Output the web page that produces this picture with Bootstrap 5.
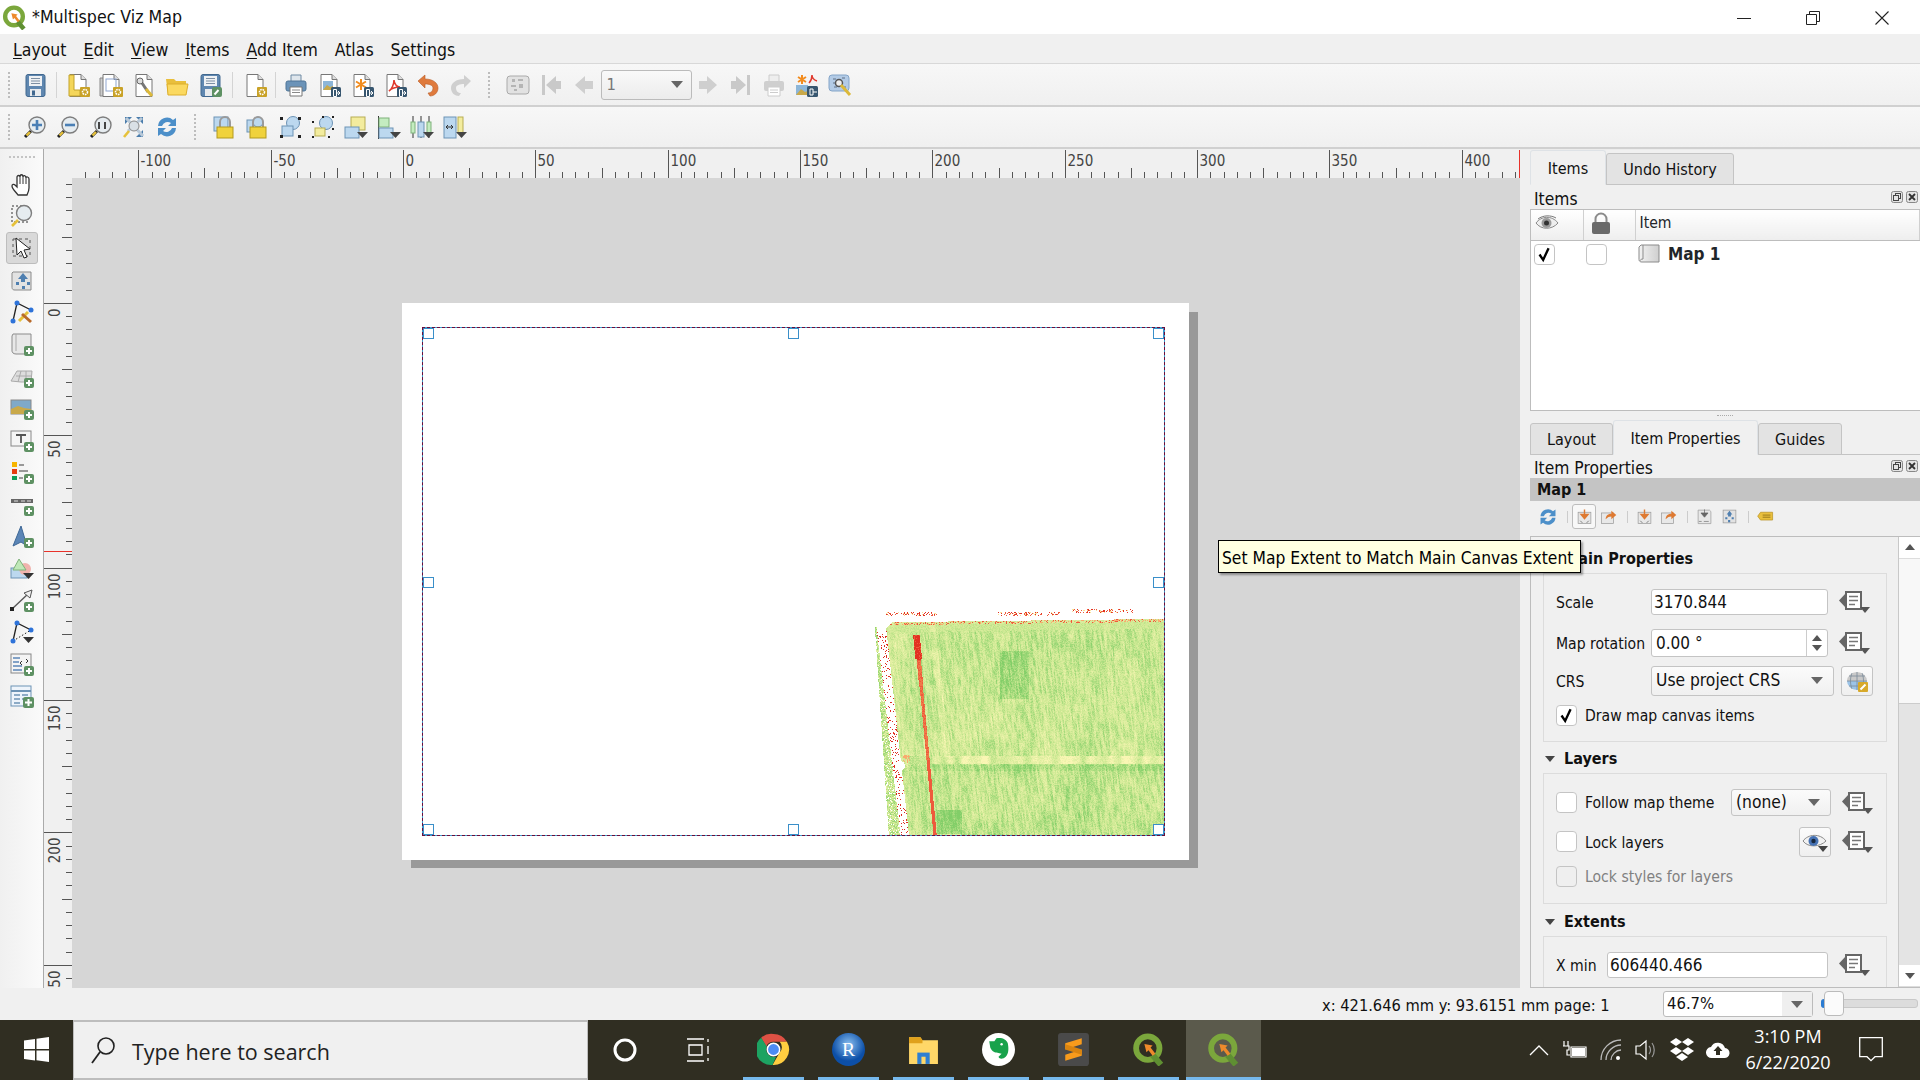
<!DOCTYPE html>
<html lang="en">
<head>
<meta charset="UTF-8">
<title>*Multispec Viz Map</title>
<link href="https://cdn.jsdelivr.net/npm/bootstrap@5.3.0/dist/css/bootstrap.min.css" rel="stylesheet">
<style>
    html, body { margin: 0; width: 1920px; height: 1080px; overflow: hidden; }
    body {
        background: #f0f0f0;
        color: #111;
        font-family: "DejaVu Sans Condensed", "DejaVu Sans", sans-serif;
        font-stretch: condensed;
        font-size: 15.6px;
        line-height: 1.2;
    }
    .app { width: 1920px; height: 1080px; }
    svg { display: block; flex: none; }

    /* title + menu */
    .titlebar { height: 34px; background: #fff; padding-left: 2px; padding-top: 1px; font-size: 17.6px; }
    .titlebar .wintitle { margin-left: 5px; }
    .winbtn { width: 69px; height: 34px; }
    .menubar { height: 30px; border-bottom: 1px solid #d8d8d8; padding-left: 13px; padding-top: 4px; font-size: 17.5px; }
    .menubar span { margin-right: 17px; }
    .menubar u { text-underline-offset: 2px; }

    /* toolbars */
    .toolrow { height: 43px; padding-top: 1px; background: linear-gradient(#f7f7f7, #f0f0f0); border-bottom: 2px solid #d0d0d0; }
    .row-first { padding-left: 8px; }
    .tcell { width: 33px; height: 33px; }
    .tsep { width: 10px; height: 26px; }
    .tsep::after { content: ""; width: 1px; height: 26px; background: #d4d4d4; }
    .tsep-wide { width: 12px; }
    .tsep-thin { width: 8px; }
    .gripv { width: 3px; height: 26px; border-left: 2px dotted #bdbdbd; }
    .gapgrip { width: 24px; }
    .grip-lead { width: 7.500px; }
    .pagecombo { width: 91px; height: 30px; background: linear-gradient(#f9f9f9, #ececec); border: 1px solid #bbb; border-radius: 3px; padding-left: 5px; color: #777; font-size: 16.5px; }
    .tri { width: 0; height: 0; border-left: 6px solid transparent; border-right: 6px solid transparent; border-top: 7px solid #666; }

    /* workspace */
    .workspace { height: 839px; }
    .vtools { width: 44px; background: linear-gradient(90deg, #f0f0f0, #fafafa); border-right: 1px solid #aaa; padding-top: 7px; }
    .griph { width: 26px; height: 3px; border-top: 2px dotted #c4c4c4; margin: 0 auto 9px; }
    .vcell { width: 32px; height: 32px; margin-left: 6px; }
    .vcell.is-on { background: #d9d9d9; border: 1px solid #bdbdbd; border-radius: 3px; }
    .viewarea { width: 1476px; }
    .hruler { height: 29px; }
    .rulerbody { height: 810px; }
    .vruler { width: 28px; }
    .ruler-txt { font-size: 15px; fill: #444; }
    .canvasarea { width: 1448px; background: #d6d6d6; overflow: hidden; }
    .pageshadow { position: absolute; left: 339px; top: 134px; width: 787px; height: 556px; background: #999; }
    .pagesheet { position: absolute; left: 330px; top: 125px; width: 787px; height: 557px; background: #fff; }
    .mapsel { position: absolute; left: 20px; top: 24px; width: 743px; height: 509px; border: 1px solid #3b9ac9; }
    .mapsel::after { content: ""; position: absolute; inset: -1px; border: 1px dashed #6d0d3b; }
    .fieldmap { position: absolute; right: 0; bottom: 0; display: block; }
    .hnd { position: absolute; width: 11px; height: 11px; background: #fff; border: 1px solid #3a8fc9; z-index: 2; }
    .h-l { left: 0; } .h-c { left: 365px; } .h-r { right: 0; }
    .h-t { top: 0; } .h-m { top: 249px; } .h-b { bottom: 0; }

    /* dock */
    .dock { width: 400px; padding-left: 10px; border-top: 1px solid #ececec; }
    .qt-tabs { --bs-nav-tabs-border-color: #c4c4c4; --bs-nav-tabs-border-width: 1px; flex-wrap: nowrap; font-size: 16px; }
    .qt-tabs .nav-link { height: 32px; padding: 0; text-align: center; line-height: 32px; color: #111; background: #e3e3e3; border: 1px solid #c4c4c4; border-radius: 3px 3px 0 0; margin-bottom: -1px; }
    .qt-tabs .nav-link.active { height: 35px; margin-top: -3px; background: #f0f0f0; border-bottom-color: #f0f0f0; line-height: 35px; color: #111; }
    .tabstrip-a { height: 36px; padding-top: 3px; }
    .tabstrip-b { height: 34px; padding-top: 2px; }
    .tw-76 { width: 76px; } .tw-128 { width: 128px; } .tw-83 { width: 83px; } .tw-145 { width: 145px; } .tw-84 { width: 84px; }
    .docktitle { height: 23px; padding-left: 4px; padding-top: 4px; font-size: 17.3px; }
    .dockbtns { gap: 3px; padding-right: 2px; padding-bottom: 5px; }
    .itemlist { height: 202px; background: #fff; border: 1px solid #bdbdbd; border-right: 0; }
    .qt-list { table-layout: fixed; width: 100%; --bs-table-bg: transparent; }
    .qt-list th { height: 30px; padding: 0 0 3px 4px; font-weight: 400; background: linear-gradient(#fff, #eee); border-bottom: 1px solid #bdbdbd; border-right: 1px solid #d0d0d0; vertical-align: middle; }
    .qt-list td { padding: 3px 3px; vertical-align: middle; }
    .w-52 { width: 52px; }
    .itemname { font-weight: 700; font-size: 17px; font-stretch: normal; margin-left: 8px; }
    .splitter { height: 10px; }
    .splitter::after { content: ""; width: 16px; border-top: 1px dotted #aaa; }
    .mapbar { height: 23px; background: #c4c4c4; font-weight: 700; font-size: 16px; padding-left: 7px; font-stretch: normal; }
    .proptools { height: 35px; padding-left: 6px; padding-bottom: 3px; }
    .ptool { width: 24.500px; height: 20px; }
    .ptool-on { width: 24px; height: 25px; background: #f8f8f8; border: 1px solid #bdbdbd; border-radius: 3px; }
    .psep { width: 1px; height: 12px; background: #ccc; margin: 0 4.500px 0 6px; }
    .scrollbox { height: 453px; border: 1px solid #bdbdbd; border-right: 0; overflow: hidden; }
    .propcol { width: 367px; padding-left: 12px; overflow: hidden; }
    .qt-scroll { width: 22px; border-left: 1px solid #c8c8c8; background: #e4e4e4; }
    .scr-btn { height: 22px; background: #fff; border-bottom: 1px solid #ddd; }
    .scr-thumb { height: 145px; background: #f8f8f8; border-bottom: 1px solid #ccc; }
    .scr-tri-up { border-left: 5px solid transparent; border-right: 5px solid transparent; border-bottom: 6px solid #555; }
    .scr-tri-dn { border-left: 5px solid transparent; border-right: 5px solid transparent; border-top: 6px solid #555; }
    .grouphead { font-weight: 700; font-size: 16px; font-stretch: normal; height: 31px; margin-left: 2px; }
    .gh-main { height: 36px; padding-top: 8px; }
    .gh-lay { height: 31px; padding-top: 3px; }
    .gh-ext { height: 32px; padding-top: 4px; }
    .gh-tri { border-left: 5px solid transparent; border-right: 5px solid transparent; border-top: 6px solid #444; margin-right: 9px; }
    .qt-group { width: 344px; border: 1px solid #dcdcdc; padding: 15px 12px 0; }
    .qt-group span { padding-top: 3px; }
    .g-main { height: 169px; }
    .g-lay { height: 131px; }
    .g-ext { height: 100px; }
    .prow { margin-bottom: 9px; }
    .h26 { height: 26px; margin-bottom: 14px; }
    .h28 { height: 28px; }
    .h30 { height: 30px; }
    .h27 { height: 27px; margin-bottom: 11px; }
    .h21 { height: 21px; }
    .lbl { width: 95px; flex: none; }
    .lbl-short { width: 51px; flex: none; }
    .qt-input { display: block; height: 100%; padding: 0 2px; border: 1px solid #c4c4c4; border-radius: 3px; background: #fff; color: #111; font-size: 17px; line-height: 1; box-shadow: none; min-height: 0; }
    .w-177 { width: 177px; } .w-221 { width: 221px; }
    .spinwrap { width: 177px; height: 100%; background: #fff; border: 1px solid #c4c4c4; border-radius: 3px; padding-left: 4px; font-size: 17px; }
    .spinbtns { width: 21px; height: 100%; margin-left: auto; border-left: 1px solid #ccc; gap: 4px; }
    .qt-combo { height: 100%; background: linear-gradient(#fbfbfb, #f0f0f0); border: 1px solid #c4c4c4; border-radius: 3px; padding: 0 10px 0 4px; font-size: 17.3px; }
    .w-183 { width: 183px; } .w-100px { width: 100px; }
    .ddbtn { margin-left: 11px; margin-top: 1px; }
    .iconbtn { width: 32px; height: 30px; background: linear-gradient(#fbfbfb, #efefef); border: 1px solid #c4c4c4; border-radius: 3px; }
    .crsbtn { margin-left: 7px; }
    .eyebtn { margin-left: auto; }
    .qt-chk { width: 21px; height: 21px; margin: 0 8px 0 0; flex: none; border: 1px solid #c4c4c4; border-radius: 1px; background-color: #fff; }
    .qt-chk:checked { background-color: #fff; border-color: #c4c4c4; background-size: 100%; background-image: url("data:image/svg+xml,%3csvg xmlns='http://www.w3.org/2000/svg' viewBox='0 0 21 21'%3e%3cpath fill='none' stroke='%23000' stroke-width='2.6' d='M5 10.5l4 6 6-13'/%3e%3c/svg%3e"); }
    .qt-chk:disabled { opacity: 1; background-color: #efefef; }
    .qt-chk:disabled ~ .txt-off { opacity: 1; color: #808080; }
    .qt-chk:focus { box-shadow: none; border-color: #c4c4c4; }
    .tipbox { position: absolute; left: 1218px; top: 540px; width: 363px; height: 33px; background: #ffffe1; border: 1px solid #000; padding-left: 3px; padding-top: 3px; color: #000; font-size: 17.3px; box-shadow: 2px 2px 2px rgba(0,0,0,.35); z-index: 9; white-space: nowrap; }

    /* status */
    .statusbar { height: 32px; font-size: 16.300px; }
    .coordtxt { margin-left: 1322px; width: 341px; padding-top: 3px; }
    .zoomcombo { width: 150px; height: 26px; background: #fff; border: 1px solid #bbb; border-radius: 3px; padding-left: 3px; font-size: 16.500px; }
    .zoomarrow { width: 30px; height: 100%; margin-left: auto; background: #efefef; }
    .zoomslide { width: 97px; height: 26px; margin-left: 8px; }
    .zs-track { position: absolute; left: 0; right: 0; top: 8px; height: 9px; background: #dcdcdc; border: 1px solid #c8c8c8; border-radius: 3px; }
    .zs-fill { position: absolute; left: 0; top: 8px; width: 6px; height: 9px; background: #2b7cd3; border-radius: 3px 0 0 3px; }
    .zs-handle { position: absolute; left: 3px; top: 0; width: 20px; height: 25px; background: #fbfbfb; border: 1px solid #bbb; border-radius: 4px; }

    /* taskbar */
    .taskbar { height: 60px; background: #302e22; color: #fff; }
    .startcell { width: 73px; height: 60px; }
    .searchbox { width: 515px; height: 60px; background: #f0f0f0; border: 1px solid #bdbdbd; border-width: 2px 1px; padding-left: 17px; color: #222; font-family: "Open Sans", sans-serif; font-size: 21.500px; font-stretch: normal; }
    .searchbox span { margin-left: 16px; padding-top: 3px; }
    .taskcell { width: 75px; height: 60px; position: relative; }
    .taskcell-first { width: 73px; }
    .taskcell.is-run::after { content: ""; position: absolute; left: 7px; right: 7px; bottom: 0; height: 3px; background: #76b9ed; }
    .taskcell.is-cur { background: #5b5a4c; }
    .taskcell.is-cur::after { left: 0; right: 0; }
    .tw36 { width: 36px; } .tw34 { width: 34px; } .tw38 { width: 38px; }
    .traycell { height: 60px; }
    .clockcell { width: 106px; height: 60px; font-family: "Open Sans", sans-serif; font-size: 18px; font-stretch: normal; gap: 5px; text-align: center; }
    .notecell { width: 60px; height: 60px; }
    .traybox { margin-left: 260px; }
</style>
</head>
<body>

<!-- icon set -->
<svg width="0" height="0" class="position-absolute">
<defs>
    <g id="b-plus"><rect x="14" y="14" width="10" height="10" rx="2" fill="#5e9163"/><path d="M19 16v6M16 19h6" stroke="#fff" stroke-width="2"/></g>
    <g id="b-gear"><rect x="14" y="14" width="10" height="10" rx="1" fill="#c9a227"/><circle cx="19" cy="19" r="2.5" fill="none" stroke="#fff" stroke-width="1.6" stroke-dasharray="1.6 .8"/></g>
    <g id="b-exp"><rect x="14" y="14" width="10" height="10" rx="1.5" fill="#37566f"/><path d="M16.500 16.500h3v7h-3zM19 20h3.500M21 18l2 2-2 2" fill="none" stroke="#fff"/></g>
    <g id="pg"><path d="M4 1.500h11l5 5v17H4z" fill="#fff" stroke="#777"/><path d="M15 1.500v5h5" fill="#ddd" stroke="#777"/></g>
    <g id="lens"><path d="M8 16 2 22" stroke="#222" stroke-width="3"/><path d="M7 17 3.500 20.500" stroke="#e6c13a" stroke-width="2.400"/><circle cx="14" cy="10" r="8" fill="#e6ecf0" stroke="#7d7d7d" stroke-width="1.400"/></g>
    <g id="lockb"><path d="M8 12V7a5 5 0 0 1 10 0v5" fill="none" stroke="#9a9a9a" stroke-width="2"/><rect x="5" y="12" width="16" height="11" fill="#f0d23c" stroke="#b39a1e"/></g>
    <g id="dtri"><path d="M13 17h11l-5.500 6z" fill="#444"/></g>

    <symbol id="i-save" viewBox="0 0 24 24"><rect x="3" y="1.500" width="19" height="22" rx="2" fill="#5f87b0" stroke="#41688f"/><rect x="6" y="3" width="13" height="10" fill="#eef1f4"/><path d="M8 5.500h9M8 8h9M8 10.500h9" stroke="#7d8fa3"/><rect x="7" y="16" width="11" height="7" fill="#e8ebee"/><rect x="9" y="17.500" width="3" height="5" fill="#41688f"/></symbol>
    <symbol id="i-newlay" viewBox="0 0 24 24"><use href="#pg"/><path d="M3 2h5v15h6v6H3z" fill="#f4d65a" stroke="#c3a32a"/><use href="#b-gear"/></symbol>
    <symbol id="i-dup" viewBox="0 0 24 24"><path d="M1 5h14v18H1z" fill="#ccc" stroke="#888"/><use href="#pg"/><rect x="7" y="6" width="10" height="12" fill="none" stroke="#8fa6cf"/><use href="#b-gear"/></symbol>
    <symbol id="i-mgr" viewBox="0 0 24 24"><use href="#pg"/><path d="M8 7l8 12" stroke="#777" stroke-width="3"/><path d="M14 16l6 7" stroke="#dcb93a" stroke-width="3"/><circle cx="8" cy="8" r="3" fill="#ddd" stroke="#666"/></symbol>
    <symbol id="i-open" viewBox="0 0 24 24"><path d="M1 6h8l2 2h10v14H3z" fill="#e9bf3c"/><path d="M2 11h21l-2 11H3z" fill="#fbd960" stroke="#dcae2c"/></symbol>
    <symbol id="i-saveas" viewBox="0 0 24 24"><rect x="3" y="1.500" width="19" height="22" rx="2" fill="#5f87b0" stroke="#41688f"/><rect x="6" y="3" width="13" height="10" fill="#eef1f4"/><path d="M8 5.500h9M8 8h9M8 10.500h9" stroke="#7d8fa3"/><rect x="7" y="16" width="7" height="7" fill="#e8ebee"/><rect x="14" y="14" width="10" height="10" rx="2" fill="#5e9163"/><path d="M16.500 21.500l4-4.500" stroke="#fff" stroke-width="2"/></symbol>
    <symbol id="i-newrep" viewBox="0 0 24 24"><use href="#pg"/><use href="#b-gear"/></symbol>
    <symbol id="i-print" viewBox="0 0 24 24"><path d="M7 2h10v7H7z" fill="#dfe6ec" stroke="#6f8aa3"/><rect x="2" y="8" width="20" height="10" rx="2" fill="#6b93b8" stroke="#4e7597"/><path d="M6 14h12v9H6z" fill="#fff" stroke="#777"/><path d="M8 17h8M8 19.500h8" stroke="#888"/></symbol>
    <symbol id="i-eximg" viewBox="0 0 24 24"><use href="#pg"/><rect x="6" y="8" width="10" height="9" fill="#8db6d8"/><path d="M6 17l4-5 3 2 3-1v4z" fill="#c9a94a"/><use href="#b-exp"/></symbol>
    <symbol id="i-exsvg" viewBox="0 0 24 24"><use href="#pg"/><path d="M11 6v11M6 8.500l10 6M16 8.500l-10 6" stroke="#f28c1e" stroke-width="2"/><use href="#b-exp"/></symbol>
    <symbol id="i-expdf" viewBox="0 0 24 24"><use href="#pg"/><path d="M6 18c3-2 5-7 5-11 0 4 3 7 6 7-4 0-8 1-11 4z" fill="none" stroke="#e03a2e" stroke-width="1.600"/><use href="#b-exp"/></symbol>
    <symbol id="i-undo" viewBox="0 0 24 24"><path d="M2 8l7-6v4c8 0 13 4 13 9s-4 8-8 8l-2-3c3 0 5-2 5-5s-4-4-8-4v4z" fill="#df7a3c" stroke="#b85c26" stroke-width=".6"/></symbol>
    <symbol id="i-redo" viewBox="0 0 24 24"><path d="M22 8l-7-6v4C7 6 2 10 2 15s4 8 8 8l2-3c-3 0-5-2-5-5s4-4 8-4v4z" fill="#cfcfcf"/></symbol>
    <symbol id="i-atlas" viewBox="0 0 24 24"><rect x="1" y="3" width="22" height="18" rx="3" fill="#e2e2e2" stroke="#aaa"/><path d="M6 6h3v3H6zM12 6h5v2h-5zM5 12h5v2H5zM13 11h4v4h-4zM8 16h3v2H8z" fill="#b5b5b5"/></symbol>
    <symbol id="i-first" viewBox="0 0 24 24"><path d="M3 2h3v20H3zM7 12l10-9v5h5v8h-5v5z" fill="#c9c9c9"/></symbol>
    <symbol id="i-prev" viewBox="0 0 24 24"><path d="M3 12l10-9v5h8v8h-8v5z" fill="#cfcfcf"/></symbol>
    <symbol id="i-next" viewBox="0 0 24 24"><path d="M21 12 11 3v5H3v8h8v5z" fill="#cfcfcf"/></symbol>
    <symbol id="i-last" viewBox="0 0 24 24"><path d="M21 2h-3v20h3zM17 12 7 3v5H2v8h5v5z" fill="#c9c9c9"/></symbol>
    <symbol id="i-printoff" viewBox="0 0 24 24"><path d="M7 2h10v7H7z" fill="#eee" stroke="#ccc"/><rect x="2" y="8" width="20" height="10" rx="2" fill="#cfcfcf"/><path d="M6 14h12v9H6z" fill="#fff" stroke="#ccc"/><path d="M8 17h8M8 19.500h8" stroke="#ccc"/></symbol>
    <symbol id="i-exall" viewBox="0 0 24 24"><rect x="1" y="12" width="12" height="10" fill="#8db6d8"/><path d="M1 22l5-6 4 3 3-1v4z" fill="#c9a94a"/><path d="M7 2v9M3 4l8 5M11 4l-8 5" stroke="#f28c1e" stroke-width="2"/><path d="M14 10c2-2 3-5 3-8 0 3 2 5 5 6" fill="none" stroke="#e03a2e" stroke-width="1.500"/><rect x="12" y="13" width="11" height="11" rx="1.500" fill="#37566f"/><path d="M15 16h3v6h-3zM18 19h4" fill="none" stroke="#fff"/></symbol>
    <symbol id="i-atset" viewBox="0 0 24 24"><rect x="1" y="2" width="20" height="16" rx="3" fill="#b3cbe6" stroke="#84a5c8"/><path d="M5 6h3M5 10h2M14 5h3M16 14h2M6 14h3" stroke="#5c6f85"/><circle cx="11" cy="10" r="3.500" fill="#eee" stroke="#555" stroke-width="1.500"/><path d="M13 12l9 10" stroke="#dcb93a" stroke-width="3"/></symbol>

    <symbol id="i-zin" viewBox="0 0 24 24"><use href="#lens"/><path d="M14 5v10M9 10h10" stroke="#4a7fb5" stroke-width="2.600"/></symbol>
    <symbol id="i-zout" viewBox="0 0 24 24"><use href="#lens"/><path d="M9 10h10" stroke="#4a7fb5" stroke-width="2.600"/></symbol>
    <symbol id="i-z11" viewBox="0 0 24 24"><use href="#lens"/><path d="M10 7v7M13 9v.01M13 12v.01M16 7v7" stroke="#333" stroke-width="1.800"/></symbol>
    <symbol id="i-zfull" viewBox="0 0 24 24"><path d="M3 2h7L3 9zM21 2h-7l7 7zM21 22h-7l7-7z" fill="#4b7dac"/><path d="M4 3l17 18M20 3 6 16" stroke="#b9c9d8" stroke-width="3"/><circle cx="12" cy="11" r="5" fill="#d9e0e6" stroke="#888"/><path d="M7 16l-5 6" stroke="#e6c13a" stroke-width="2.600"/></symbol>
    <symbol id="i-refresh" viewBox="0 0 24 24"><path d="M3 11a9 9 0 0 1 15-6l3-2v8h-8l3-3a6 6 0 0 0-9 3z" fill="#4c8fc9"/><path d="M21 13a9 9 0 0 1-15 6l-3 2v-8h8l-3 3a6 6 0 0 0 9-3z" fill="#4c8fc9"/></symbol>
    <symbol id="i-lock" viewBox="0 0 24 24"><rect x="2" y="2" width="14" height="14" fill="#bcd8ef" stroke="#6d93b5"/><use href="#lockb"/></symbol>
    <symbol id="i-unlock" viewBox="0 0 24 24"><rect x="2" y="5" width="12" height="12" fill="#bcd8ef" stroke="#6d93b5"/><circle cx="13" cy="7" r="5" fill="#bcd8ef" stroke="#6d93b5"/><use href="#lockb"/></symbol>
    <symbol id="i-group" viewBox="0 0 24 24"><circle cx="15" cy="8" r="6.500" fill="#bcd8ef" stroke="#6d93b5"/><rect x="4" y="11" width="11" height="10" fill="#bcd8ef" stroke="#6d93b5"/><path d="M2 2h3v3H2zM20 2h3v3h-3zM2 20h3v3H2zM20 20h3v3h-3z" fill="#222"/></symbol>
    <symbol id="i-ungroup" viewBox="0 0 24 24"><circle cx="15" cy="8" r="6.500" fill="#bcd8ef" stroke="#6d93b5"/><rect x="4" y="13" width="10" height="8" fill="#f3ec9e" stroke="#b7ad53"/><path d="M1 6h2v2H1zM11 1h2v2h-2zM21 1h2v2h-2zM21 13h2v2h-2zM1 21h2v2H1zM17 21h2v2h-2z" fill="#222"/></symbol>
    <symbol id="i-raise" viewBox="0 0 24 24"><rect x="7" y="2" width="14" height="13" fill="#f3ec9e" stroke="#b7ad53"/><rect x="1" y="12" width="14" height="11" fill="#bcd8ef" stroke="#6d93b5"/><use href="#dtri"/></symbol>
    <symbol id="i-align" viewBox="0 0 24 24"><path d="M1.500 1v23" stroke="#333"/><rect x="2" y="3" width="10" height="9" fill="#c4ecc0" stroke="#7fb27b"/><rect x="2" y="13" width="14" height="10" fill="#bcd8ef" stroke="#6d93b5"/><use href="#dtri"/></symbol>
    <symbol id="i-dist" viewBox="0 0 24 24"><path d="M3 1v22M11 1v22M19 1v22" stroke="#333"/><rect x="1" y="7" width="4" height="11" fill="#c4ecc0" stroke="#7fb27b"/><rect x="8" y="7" width="6" height="15" fill="#bcd8ef" stroke="#6d93b5"/><rect x="17" y="7" width="4" height="11" fill="#c4ecc0" stroke="#7fb27b"/><use href="#dtri"/></symbol>
    <symbol id="i-resize" viewBox="0 0 24 24"><rect x="1" y="2" width="12" height="21" fill="#bcd8ef" stroke="#6d93b5"/><path d="M3 12h7M3 12l2-2M3 12l2 2M10 12l-2-2M10 12l-2 2" stroke="#333"/><rect x="15" y="2" width="5" height="16" fill="#f3ec9e" stroke="#b7ad53"/><use href="#dtri"/></symbol>

    <symbol id="i-hand" viewBox="0 0 24 24"><path d="M8 23c-2-3-6-6-6-9 0-2 2-2 3-1l2 2V5c0-2 3-2 3 0 0-3 3-3 3 0 0-2 3-2 3 1 0-2 3-1 3 1v9c0 3-1 5-2 7z" fill="#fff" stroke="#333" stroke-width="1.300"/><path d="M10 5v7M13 5v7M16 6v6" stroke="#333"/></symbol>
    <symbol id="i-mzoom" viewBox="0 0 24 24"><rect x="2" y="2" width="16" height="16" fill="none" stroke="#333" stroke-dasharray="2 2"/><path d="M8 16l-6 6" stroke="#e6c13a" stroke-width="2.600"/><circle cx="14" cy="9" r="7.500" fill="#e6ecf0" stroke="#7d7d7d" stroke-width="1.400"/></symbol>
    <symbol id="i-select" viewBox="0 0 24 24"><rect x="3" y="3" width="17" height="17" fill="none" stroke="#555" stroke-dasharray="3 3"/><path d="M6 2l1 17 4-4 3 7 3-1-3-7 6-1z" fill="#fff" stroke="#222"/></symbol>
    <symbol id="i-move" viewBox="0 0 24 24"><path d="M3 4h18v18H5c-3 0-3-2-3-3V5z" fill="#e2e2e2" stroke="#8b8b8b"/><path d="M13 5l5 6h-3v3h-4v-3H8z" fill="#4f7fb0"/><path d="M6 14h3v3H6zM17 14h3v3h-3zM12 18h3v3h-3z" fill="#4f7fb0"/></symbol>
    <symbol id="i-nodes" viewBox="0 0 24 24"><path d="M3 21 7 3l14 7" fill="none" stroke="#222" stroke-width="1.300"/><circle cx="3" cy="21" r="2.500" fill="#2e73d9"/><circle cx="7" cy="3" r="2.500" fill="#2e73d9"/><circle cx="21" cy="10" r="2.500" fill="#2e73d9"/><path d="M9 21l9-9" stroke="#e6c13a" stroke-width="3"/><path d="M12 14l9 8" stroke="#b86a2a" stroke-width="3"/></symbol>
    <symbol id="i-addmap" viewBox="0 0 24 24"><path d="M3 2h18v20H6c-3 0-4-2-4-3V4z" fill="#e8e8e8" stroke="#8b8b8b"/><path d="M6 2v17" stroke="#aaa"/><use href="#b-plus"/></symbol>
    <symbol id="i-add3d" viewBox="0 0 24 24"><path d="M1 17l6-10h15l-1 11H11z" fill="#ddd" stroke="#aaa"/><path d="M6 12h15M11 7l-3 11M16 7v11" stroke="#aaa"/><use href="#b-plus"/></symbol>
    <symbol id="i-addpic" viewBox="0 0 24 24"><rect x="1" y="4" width="20" height="14" fill="#7fa9c9" stroke="#888"/><path d="M1 18v-5l7-3 6 2 7 1v5z" fill="#c9a94a"/><use href="#b-plus"/></symbol>
    <symbol id="i-addlab" viewBox="0 0 24 24"><rect x="1" y="3" width="20" height="15" fill="#f5f5f5" stroke="#888"/><path d="M6 7h10M11 7v8" stroke="#555" stroke-width="1.800"/><use href="#b-plus"/></symbol>
    <symbol id="i-addleg" viewBox="0 0 24 24"><rect x="2" y="2" width="5" height="5" fill="#f7b500"/><rect x="2" y="9" width="5" height="5" fill="#e63c12"/><rect x="2" y="16" width="5" height="4" fill="#0f9d58"/><path d="M9 5h5M9 11h9M9 18h4" stroke="#999" stroke-width="2"/><use href="#b-plus"/></symbol>
    <symbol id="i-addbar" viewBox="0 0 24 24"><rect x="1" y="7" width="22" height="4" fill="#666"/><path d="M4 9h4M11 9h4M17 9h4" stroke="#ddd"/><use href="#b-plus"/></symbol>
    <symbol id="i-addnorth" viewBox="0 0 24 24"><path d="M3 22 11 2l6 20-6-4z" fill="#5b85b6" stroke="#3e6796"/><use href="#b-plus"/></symbol>
    <symbol id="i-addshape" viewBox="0 0 24 24"><rect x="1" y="12" width="16" height="10" fill="#bcd8ef" stroke="#6d93b5"/><circle cx="15" cy="13" r="6" fill="#f0b3ad"/><path d="M3 14 9 3l7 11z" fill="#bfe8b8" stroke="#7fb27b"/><path d="M13 17h11l-5.500 6z" fill="#333"/></symbol>
    <symbol id="i-addarrow" viewBox="0 0 24 24"><path d="M2 21 19 5" stroke="#555" stroke-width="1.400"/><rect x="0" y="19" width="4" height="4" fill="#222"/><path d="M14 5l8-3-2 8z" fill="#eee" stroke="#555"/><use href="#b-plus"/></symbol>
    <symbol id="i-addnode" viewBox="0 0 24 24"><path d="M3 21 7 3l14 7" fill="none" stroke="#222" stroke-width="1.300"/><path d="M3 21l18-11" stroke="#222" stroke-dasharray="1.500 2"/><circle cx="3" cy="21" r="2.500" fill="#2e73d9"/><circle cx="7" cy="3" r="2.500" fill="#2e73d9"/><circle cx="21" cy="10" r="2.500" fill="#2e73d9"/><path d="M13 17h11l-5.500 6z" fill="#333"/></symbol>
    <symbol id="i-addhtml" viewBox="0 0 24 24"><rect x="1" y="2" width="20" height="19" fill="#f4f4f4" stroke="#888"/><path d="M3 6h7M3 10h6M3 14h9M3 18h9" stroke="#5b85b6" stroke-width="1.500"/><path d="M12 9l-2 2 2 2M16 7l2 2-2 2" fill="none" stroke="#333"/><use href="#b-plus"/></symbol>
    <symbol id="i-addtable" viewBox="0 0 24 24"><rect x="1" y="2" width="20" height="20" fill="#eef4fb" stroke="#6d93b5"/><path d="M1 7h20" stroke="#6d93b5" stroke-width="2"/><path d="M4 11h6M12 11h6M4 15h6M12 15h6M4 19h6" stroke="#6d93b5" stroke-width="1.500"/><rect x="13" y="13" width="11" height="11" rx="2" fill="#5e9163"/><path d="M18.500 15v7M15 18.500h7" stroke="#fff" stroke-width="2"/></symbol>

    <symbol id="i-dockfloat" viewBox="0 0 12 12"><rect x=".5" y=".5" width="11" height="11" rx="2" fill="#e4e4e4" stroke="#888"/><rect x="4.500" y="2.500" width="5" height="5" fill="none" stroke="#444"/><rect x="2.500" y="4.500" width="5" height="5" fill="#e4e4e4" stroke="#444"/></symbol>
    <symbol id="i-dockclose" viewBox="0 0 12 12"><rect x=".5" y=".5" width="11" height="11" rx="2" fill="#e4e4e4" stroke="#888"/><path d="M3 3l6 6M9 3 3 9" stroke="#333" stroke-width="1.800"/></symbol>
    <symbol id="i-eye" viewBox="0 0 24 16"><path d="M1 8c5-7 16-8 22 0-6 7-17 7-22 0z" fill="#eee" stroke="#888"/><circle cx="11.500" cy="8" r="5" fill="#9a9a9a"/><circle cx="11.500" cy="8" r="2.500" fill="#333"/><path d="M3 4c5-4 13-4 18-1" fill="none" stroke="#777"/></symbol>
    <symbol id="i-graylock" viewBox="0 0 18 22"><path d="M3.500 11V7a5.500 5.500 0 0 1 11 0v4" fill="none" stroke="#8a8a8a" stroke-width="2"/><rect x="0" y="10" width="18" height="12" rx="2" fill="#6a6a6a"/></symbol>
    <symbol id="i-mapitem" viewBox="0 0 22 20"><defs><linearGradient id="mapgrad" x1="0" x2="1"><stop offset="0" stop-color="#f2f2f2"/><stop offset="1" stop-color="#cfcfcf"/></linearGradient></defs><path d="M3 1h18v17H4c-3 0-3-2-3-3V3z" fill="url(#mapgrad)" stroke="#8b8b8b"/><path d="M5 1v14c-2 0-3 1-3 2" fill="none" stroke="#8b8b8b"/></symbol>

    <symbol id="p-refresh" viewBox="0 0 24 24"><path d="M3 11a9 9 0 0 1 15-6l3-2v8h-8l3-3a6 6 0 0 0-9 3z" fill="#4c8fc9"/><path d="M21 13a9 9 0 0 1-15 6l-3 2v-8h8l-3 3a6 6 0 0 0 9-3z" fill="#4c8fc9"/></symbol>
    <symbol id="p-down" viewBox="0 0 24 24"><rect x="3" y="6" width="18" height="16" fill="#e8e8e8" stroke="#999"/><path d="M12 2v11M7 9l5 6 5-6z" fill="#de7a32" stroke="#de7a32" stroke-width="2"/><path d="M6 18l3 3M18 18l-3 3" stroke="#555"/></symbol>
    <symbol id="p-up" viewBox="0 0 24 24"><rect x="2" y="7" width="17" height="15" fill="#e8e8e8" stroke="#999"/><path d="M8 16c0-6 4-8 8-8V4l7 6-7 6v-4c-3 0-5 1-8 4z" fill="#de7a32"/></symbol>
    <symbol id="p-bm" viewBox="0 0 24 24"><path d="M3 3h16l2 2v17H3z" fill="#e8e8e8" stroke="#999"/><path d="M12 2v9M7 7l5 6 5-6z" fill="#666" stroke="#666"/><path d="M4 19h4M11 19h7" stroke="#777"/></symbol>
    <symbol id="p-move" viewBox="0 0 24 24"><rect x="3" y="3" width="18" height="18" fill="#e2e2e2" stroke="#999"/><path d="M12 4l4 5h-2v3h-4V9H8z" fill="#4f7fb0"/><path d="M6 13h3v3H6zM15 13h3v3h-3zM10 17h3v3h-3z" fill="#4f7fb0"/></symbol>
    <symbol id="p-label" viewBox="0 0 24 24"><path d="M5 6h17v11H5l-4-5.500z" fill="#e9bf3c" stroke="#b89020"/><path d="M8 10h11M8 13h11" stroke="#7a5d10"/></symbol>

    <symbol id="i-dd" viewBox="0 0 32 24"><path d="M0 10.500 7 3v15z" fill="#666"/><rect x="7" y="2" width="15" height="17" fill="#fff" stroke="#666" stroke-width="2"/><path d="M10 6.500h9M10 10.500h9M10 14.500h6" stroke="#777" stroke-width="1.600"/><path d="M21 17h10l-5 6z" fill="#555"/></symbol>
    <symbol id="i-crs" viewBox="0 0 24 24"><path d="M2 12a10 9 0 0 1 20 0" fill="#c9c9c9"/><path d="M2 12a10 9 0 0 0 20 0z" fill="#9cc4e8"/><path d="M2 12h20M12 3v18M7 4c-2 5-2 11 0 16M17 4c2 5 2 11 0 16M4 7h16M4 17h16" stroke="#7b8b99" fill="none" stroke-width=".8"/><rect x="13" y="13" width="10" height="10" rx="1" fill="#d7a92a"/><path d="M15.500 20.500l5-5" stroke="#fff" stroke-width="2"/></symbol>
    <symbol id="i-eyeblue" viewBox="0 0 26 20"><path d="M1 9c5-7 17-8 23 0-6 6-18 7-23 0z" fill="#f2f2f2" stroke="#888"/><circle cx="11.500" cy="9" r="5" fill="#4672b4"/><circle cx="11.500" cy="9" r="2.200" fill="#18283f"/><path d="M16 14h10l-5 6z" fill="#444"/></symbol>

    <symbol id="logo-q" viewBox="0 0 24 24"><circle cx="11.500" cy="11" r="8.500" fill="none" stroke="#7ba73c" stroke-width="4.200"/><path d="M15 16l6 7" stroke="#5f8f32" stroke-width="4.400"/><path d="M9 8l6 1-1.500 1.500 3.500 4.500-2 1.500-3-4-1.500 1.500z" fill="#ee8a2b"/></symbol>
    <symbol id="t-chrome" viewBox="0 0 32 32"><path d="M16 1a15 15 0 0 1 13 7.500H16A7.500 7.500 0 0 0 9 13L4 4.500A15 15 0 0 1 16 1z" fill="#dd5144"/><path d="M29 8.500A15 15 0 0 1 15 31l7-12a7.500 7.500 0 0 0 0-10.500z" fill="#ffcd40"/><path d="M4 4.500 9.500 13a7.500 7.500 0 0 0 9 10L15 31A15 15 0 0 1 4 4.500z" fill="#1da362"/><circle cx="16" cy="16" r="6" fill="#4c8bf5" stroke="#fff" stroke-width="1.500"/></symbol>
    <symbol id="t-r" viewBox="0 0 32 32"><defs><radialGradient id="rblue" cx=".5" cy=".35"><stop offset="0" stop-color="#8ac0f0"/><stop offset="1" stop-color="#0c4fa8"/></radialGradient></defs><circle cx="16" cy="16" r="16" fill="url(#rblue)"/><text x="16" y="22.500" text-anchor="middle" font-family="Liberation Serif, serif" font-size="19" fill="#fff">R</text></symbol>
    <symbol id="t-folder" viewBox="0 0 32 32"><path d="M2 4h11l2 3h15v23H2z" fill="#ffd768"/><path d="M2 4h11l2 3v3H2z" fill="#e0a11b"/><rect x="10" y="19" width="12" height="11" fill="#2f7fd1"/><rect x="14" y="23" width="4" height="7" fill="#ffd768"/></symbol>
    <symbol id="t-note" viewBox="0 0 32 32"><circle cx="16" cy="16" r="16" fill="#fff"/><path d="M7 8h5l2-3c5-1 10 1 11 5 1 5 1 10-2 13-2 2-6 3-7 0l3-3-5-1c-2 0-5-2-6-5z" fill="#18a24b"/><circle cx="19" cy="11" r="1.200" fill="#fff"/></symbol>
    <symbol id="t-sublime" viewBox="0 0 32 32"><rect x="1" y="0" width="30" height="32" rx="3" fill="#4a4a4a"/><path d="M8 10l16-5v6L8 16zM24 22 8 27v-6l16-5z" fill="#f89b1c"/><path d="M8 16l16 5v-5L8 11z" fill="#d98410"/></symbol>
</defs>
</svg>

<div class="app d-flex flex-column position-relative">

    <!-- title bar -->
    <div class="titlebar d-flex align-items-center">
        <svg width="25" height="25"><use href="#logo-q"/></svg>
        <span class="wintitle">*Multispec Viz Map</span>
        <div class="d-flex ms-auto me-1">
            <div class="winbtn d-flex align-items-center justify-content-center"><svg width="14" height="14"><path d="M0 7.500h14" stroke="#222"/></svg></div>
            <div class="winbtn d-flex align-items-center justify-content-center"><svg width="14" height="14"><path d="M.5 3.500h10v10H.5zM3.500 3.500v-3h10v10h-3" fill="none" stroke="#222"/></svg></div>
            <div class="winbtn d-flex align-items-center justify-content-center"><svg width="14" height="14"><path d="M.5.5l13 13M13.500.5l-13 13" stroke="#222" stroke-width="1.100"/></svg></div>
        </div>
    </div>

    <!-- menu -->
    <div class="menubar d-flex align-items-center">
        <span><u>L</u>ayout</span><span><u>E</u>dit</span><span><u>V</u>iew</span><span><u>I</u>tems</span><span><u>A</u>dd Item</span><span>Atlas</span><span>Settings</span>
    </div>

    <!-- first toolbar -->
    <div class="toolrow row-first d-flex align-items-center">
        <div class="gripv"></div><div class="grip-lead"></div>
        <div class="tcell d-flex align-items-center justify-content-center"><svg width="24" height="24"><use href="#i-save"/></svg></div>
        <div class="tsep d-flex justify-content-center"></div>
        <div class="tcell d-flex align-items-center justify-content-center"><svg width="24" height="24"><use href="#i-newlay"/></svg></div>
        <div class="tcell d-flex align-items-center justify-content-center"><svg width="24" height="24"><use href="#i-dup"/></svg></div>
        <div class="tcell d-flex align-items-center justify-content-center"><svg width="24" height="24"><use href="#i-mgr"/></svg></div>
        <div class="tcell d-flex align-items-center justify-content-center"><svg width="24" height="24"><use href="#i-open"/></svg></div>
        <div class="tcell d-flex align-items-center justify-content-center"><svg width="24" height="24"><use href="#i-saveas"/></svg></div>
        <div class="tsep tsep-wide d-flex justify-content-center"></div>
        <div class="tcell d-flex align-items-center justify-content-center"><svg width="24" height="24"><use href="#i-newrep"/></svg></div>
        <div class="tsep tsep-thin d-flex justify-content-center"></div>
        <div class="tcell d-flex align-items-center justify-content-center"><svg width="24" height="24"><use href="#i-print"/></svg></div>
        <div class="tcell d-flex align-items-center justify-content-center"><svg width="24" height="24"><use href="#i-eximg"/></svg></div>
        <div class="tcell d-flex align-items-center justify-content-center"><svg width="24" height="24"><use href="#i-exsvg"/></svg></div>
        <div class="tcell d-flex align-items-center justify-content-center"><svg width="24" height="24"><use href="#i-expdf"/></svg></div>
        <div class="tcell d-flex align-items-center justify-content-center"><svg width="24" height="24"><use href="#i-undo"/></svg></div>
        <div class="tcell d-flex align-items-center justify-content-center"><svg width="24" height="24"><use href="#i-redo"/></svg></div>
        <div class="gapgrip d-flex justify-content-center"><div class="gripv"></div></div>
        <div class="tcell d-flex align-items-center justify-content-center"><svg width="24" height="24"><use href="#i-atlas"/></svg></div>
        <div class="tcell d-flex align-items-center justify-content-center"><svg width="24" height="24"><use href="#i-first"/></svg></div>
        <div class="tcell d-flex align-items-center justify-content-center"><svg width="24" height="24"><use href="#i-prev"/></svg></div>
        <div class="pagecombo d-flex align-items-center justify-content-between"><span>1</span><div class="tri me-2"></div></div>
        <div class="tcell d-flex align-items-center justify-content-center"><svg width="24" height="24"><use href="#i-next"/></svg></div>
        <div class="tcell d-flex align-items-center justify-content-center"><svg width="24" height="24"><use href="#i-last"/></svg></div>
        <div class="tcell d-flex align-items-center justify-content-center"><svg width="24" height="24"><use href="#i-printoff"/></svg></div>
        <div class="tcell d-flex align-items-center justify-content-center"><svg width="24" height="24"><use href="#i-exall"/></svg></div>
        <div class="tcell d-flex align-items-center justify-content-center"><svg width="24" height="24"><use href="#i-atset"/></svg></div>
    </div>

    <!-- second toolbar -->
    <div class="toolrow row-first d-flex align-items-center">
        <div class="gripv"></div><div class="grip-lead"></div>
        <div class="tcell d-flex align-items-center justify-content-center"><svg width="24" height="24"><use href="#i-zin"/></svg></div>
        <div class="tcell d-flex align-items-center justify-content-center"><svg width="24" height="24"><use href="#i-zout"/></svg></div>
        <div class="tcell d-flex align-items-center justify-content-center"><svg width="24" height="24"><use href="#i-z11"/></svg></div>
        <div class="tcell d-flex align-items-center justify-content-center"><svg width="24" height="24"><use href="#i-zfull"/></svg></div>
        <div class="tcell d-flex align-items-center justify-content-center"><svg width="24" height="24"><use href="#i-refresh"/></svg></div>
        <div class="gapgrip d-flex justify-content-center"><div class="gripv"></div></div>
        <div class="tcell d-flex align-items-center justify-content-center"><svg width="24" height="24"><use href="#i-lock"/></svg></div>
        <div class="tcell d-flex align-items-center justify-content-center"><svg width="24" height="24"><use href="#i-unlock"/></svg></div>
        <div class="tcell d-flex align-items-center justify-content-center"><svg width="24" height="24"><use href="#i-group"/></svg></div>
        <div class="tcell d-flex align-items-center justify-content-center"><svg width="24" height="24"><use href="#i-ungroup"/></svg></div>
        <div class="tcell d-flex align-items-center justify-content-center"><svg width="24" height="24"><use href="#i-raise"/></svg></div>
        <div class="tcell d-flex align-items-center justify-content-center"><svg width="24" height="24"><use href="#i-align"/></svg></div>
        <div class="tcell d-flex align-items-center justify-content-center"><svg width="24" height="24"><use href="#i-dist"/></svg></div>
        <div class="tcell d-flex align-items-center justify-content-center"><svg width="24" height="24"><use href="#i-resize"/></svg></div>
    </div>

    <!-- main area -->
    <div class="workspace d-flex">
        <div class="vtools">
            <div class="griph"></div>
            <div class="vcell d-flex align-items-center justify-content-center"><svg width="24" height="24"><use href="#i-hand"/></svg></div>
            <div class="vcell d-flex align-items-center justify-content-center"><svg width="24" height="24"><use href="#i-mzoom"/></svg></div>
            <div class="vcell is-on d-flex align-items-center justify-content-center"><svg width="24" height="24"><use href="#i-select"/></svg></div>
            <div class="vcell d-flex align-items-center justify-content-center"><svg width="24" height="24"><use href="#i-move"/></svg></div>
            <div class="vcell d-flex align-items-center justify-content-center"><svg width="24" height="24"><use href="#i-nodes"/></svg></div>
            <div class="vcell d-flex align-items-center justify-content-center"><svg width="24" height="24"><use href="#i-addmap"/></svg></div>
            <div class="vcell d-flex align-items-center justify-content-center"><svg width="24" height="24"><use href="#i-add3d"/></svg></div>
            <div class="vcell d-flex align-items-center justify-content-center"><svg width="24" height="24"><use href="#i-addpic"/></svg></div>
            <div class="vcell d-flex align-items-center justify-content-center"><svg width="24" height="24"><use href="#i-addlab"/></svg></div>
            <div class="vcell d-flex align-items-center justify-content-center"><svg width="24" height="24"><use href="#i-addleg"/></svg></div>
            <div class="vcell d-flex align-items-center justify-content-center"><svg width="24" height="24"><use href="#i-addbar"/></svg></div>
            <div class="vcell d-flex align-items-center justify-content-center"><svg width="24" height="24"><use href="#i-addnorth"/></svg></div>
            <div class="vcell d-flex align-items-center justify-content-center"><svg width="24" height="24"><use href="#i-addshape"/></svg></div>
            <div class="vcell d-flex align-items-center justify-content-center"><svg width="24" height="24"><use href="#i-addarrow"/></svg></div>
            <div class="vcell d-flex align-items-center justify-content-center"><svg width="24" height="24"><use href="#i-addnode"/></svg></div>
            <div class="vcell d-flex align-items-center justify-content-center"><svg width="24" height="24"><use href="#i-addhtml"/></svg></div>
            <div class="vcell d-flex align-items-center justify-content-center"><svg width="24" height="24"><use href="#i-addtable"/></svg></div>
        </div>

        <div class="viewarea d-flex flex-column">
            <svg class="hruler" id="hRuler" width="1476" height="29"></svg>
            <div class="rulerbody d-flex">
                <svg class="vruler" id="vRuler" width="28" height="810"></svg>
                <div class="canvasarea position-relative">
                    <div class="pageshadow"></div>
                    <div class="pagesheet">
                        <div class="mapsel">
                            <canvas class="fieldmap" id="fieldMap" width="298" height="235"></canvas>
                            <div class="hnd h-l h-t"></div><div class="hnd h-c h-t"></div><div class="hnd h-r h-t"></div>
                            <div class="hnd h-l h-m"></div><div class="hnd h-r h-m"></div>
                            <div class="hnd h-l h-b"></div><div class="hnd h-c h-b"></div><div class="hnd h-r h-b"></div>
                        </div>
                    </div>
                </div>
            </div>
        </div>

        <!-- right dock -->
        <div class="dock d-flex flex-column">
            <div class="tabstrip-a">
                <ul class="nav nav-tabs qt-tabs">
                    <li class="nav-item"><a class="nav-link active tw-76" href="#">Items</a></li>
                    <li class="nav-item"><a class="nav-link tw-128" href="#">Undo History</a></li>
                </ul>
            </div>
            <div class="docktitle d-flex align-items-center justify-content-between">
                <span>Items</span>
                <div class="dockbtns d-flex"><svg width="12" height="12"><use href="#i-dockfloat"/></svg><svg width="12" height="12"><use href="#i-dockclose"/></svg></div>
            </div>
            <div class="itemlist">
                <table class="table table-borderless mb-0 qt-list">
                    <thead>
                        <tr>
                            <th class="w-52"><svg width="24" height="16"><use href="#i-eye"/></svg></th>
                            <th class="w-52"><svg class="ms-1" width="18" height="22"><use href="#i-graylock"/></svg></th>
                            <th>Item</th>
                        </tr>
                    </thead>
                    <tbody>
                        <tr>
                            <td><input class="form-check-input qt-chk d-block" type="checkbox" checked></td>
                            <td><input class="form-check-input qt-chk d-block" type="checkbox"></td>
                            <td><div class="d-flex align-items-center"><svg width="22" height="20"><use href="#i-mapitem"/></svg><span class="itemname">Map 1</span></div></td>
                        </tr>
                    </tbody>
                </table>
            </div>
            <div class="splitter d-flex align-items-center justify-content-center"></div>
            <div class="tabstrip-b">
                <ul class="nav nav-tabs qt-tabs">
                    <li class="nav-item"><a class="nav-link tw-83" href="#">Layout</a></li>
                    <li class="nav-item"><a class="nav-link active tw-145" href="#">Item Properties</a></li>
                    <li class="nav-item"><a class="nav-link tw-84" href="#">Guides</a></li>
                </ul>
            </div>
            <div class="docktitle d-flex align-items-center justify-content-between">
                <span>Item Properties</span>
                <div class="dockbtns d-flex"><svg width="12" height="12"><use href="#i-dockfloat"/></svg><svg width="12" height="12"><use href="#i-dockclose"/></svg></div>
            </div>
            <div class="mapbar d-flex align-items-center">Map 1</div>
            <div class="proptools d-flex align-items-center">
                <div class="ptool d-flex justify-content-center"><svg width="20" height="20"><use href="#p-refresh"/></svg></div>
                <div class="psep"></div>
                <div class="ptool-on d-flex align-items-center justify-content-center"><svg width="17" height="17"><use href="#p-down"/></svg></div>
                <div class="ptool d-flex align-items-center justify-content-center"><svg width="17" height="17"><use href="#p-up"/></svg></div>
                <div class="psep"></div>
                <div class="ptool d-flex align-items-center justify-content-center"><svg width="17" height="17"><use href="#p-down"/></svg></div>
                <div class="ptool d-flex align-items-center justify-content-center"><svg width="17" height="17"><use href="#p-up"/></svg></div>
                <div class="psep"></div>
                <div class="ptool d-flex align-items-center justify-content-center"><svg width="17" height="17"><use href="#p-bm"/></svg></div>
                <div class="ptool d-flex align-items-center justify-content-center"><svg width="17" height="17"><use href="#p-move"/></svg></div>
                <div class="psep"></div>
                <div class="ptool d-flex align-items-center justify-content-center"><svg width="17" height="17"><use href="#p-label"/></svg></div>
            </div>

            <div class="scrollbox d-flex">
                <div class="propcol">
                    <div class="grouphead gh-main d-flex align-items-center"><div class="gh-tri"></div>Main Properties</div>
                    <div class="qt-group g-main">
                        <div class="d-flex align-items-center h26">
                            <span class="lbl">Scale</span>
                            <input class="form-control qt-input w-177" type="text" value="3170.844">
                            <svg class="ddbtn" width="32" height="24"><use href="#i-dd"/></svg>
                        </div>
                        <div class="d-flex align-items-center h28 prow">
                            <span class="lbl">Map rotation</span>
                            <div class="spinwrap d-flex align-items-center">0.00 °
                                <div class="spinbtns d-flex flex-column align-items-center justify-content-center"><div class="scr-tri-up"></div><div class="scr-tri-dn"></div></div>
                            </div>
                            <svg class="ddbtn" width="32" height="24"><use href="#i-dd"/></svg>
                        </div>
                        <div class="d-flex align-items-center h30 prow">
                            <span class="lbl">CRS</span>
                            <div class="qt-combo w-183 d-flex align-items-center justify-content-between">Use project CRS<div class="tri"></div></div>
                            <div class="iconbtn crsbtn d-flex align-items-center justify-content-center"><svg width="24" height="24"><use href="#i-crs"/></svg></div>
                        </div>
                        <div class="d-flex align-items-center h21">
                            <input class="form-check-input qt-chk" type="checkbox" checked><span>Draw map canvas items</span>
                        </div>
                    </div>

                    <div class="grouphead gh-lay d-flex align-items-center"><div class="gh-tri"></div>Layers</div>
                    <div class="qt-group g-lay">
                        <div class="d-flex align-items-center h27">
                            <input class="form-check-input qt-chk" type="checkbox"><span>Follow map theme</span>
                            <div class="qt-combo w-100px d-flex align-items-center justify-content-between ms-auto">(none)<div class="tri"></div></div>
                            <svg class="ddbtn" width="32" height="24"><use href="#i-dd"/></svg>
                        </div>
                        <div class="d-flex align-items-center h30 prow">
                            <input class="form-check-input qt-chk" type="checkbox"><span>Lock layers</span>
                            <div class="iconbtn eyebtn d-flex align-items-center justify-content-center"><svg width="26" height="20"><use href="#i-eyeblue"/></svg></div>
                            <svg class="ddbtn" width="32" height="24"><use href="#i-dd"/></svg>
                        </div>
                        <div class="d-flex align-items-center h21">
                            <input class="form-check-input qt-chk" type="checkbox" disabled><span class="txt-off">Lock styles for layers</span>
                        </div>
                    </div>

                    <div class="grouphead gh-ext d-flex align-items-center"><div class="gh-tri"></div>Extents</div>
                    <div class="qt-group g-ext">
                        <div class="d-flex align-items-center h26">
                            <span class="lbl-short">X min</span>
                            <input class="form-control qt-input w-221" type="text" value="606440.466">
                            <svg class="ddbtn" width="32" height="24"><use href="#i-dd"/></svg>
                        </div>
                    </div>
                </div>
                <div class="qt-scroll d-flex flex-column">
                    <div class="scr-btn d-flex align-items-center justify-content-center"><div class="scr-tri-up"></div></div>
                    <div class="scr-thumb"></div>
                    <div class="scr-btn d-flex align-items-center justify-content-center mt-auto"><div class="scr-tri-dn"></div></div>
                </div>
            </div>
        </div>
    </div>

    <!-- status bar -->
    <div class="statusbar d-flex align-items-center">
        <span class="coordtxt">x: 421.646 mm y: 93.6151 mm page: 1</span>
        <div class="zoomcombo d-flex align-items-center">46.7%<div class="zoomarrow d-flex align-items-center justify-content-center"><div class="tri"></div></div></div>
        <div class="zoomslide position-relative">
            <div class="zs-track"></div><div class="zs-fill"></div><div class="zs-handle"></div>
        </div>
    </div>

    <!-- taskbar -->
    <div class="taskbar d-flex">
        <div class="startcell d-flex align-items-center justify-content-center">
            <svg width="25" height="25"><path d="M0 3.500 11 2v10H0zM12.500 1.800 25 0v12H12.500zM0 13.500h11v10L0 22zM12.500 13.500H25V25l-12.500-1.800z" fill="#fff"/></svg>
        </div>
        <div class="searchbox d-flex align-items-center">
            <svg width="25" height="28"><circle cx="15" cy="10" r="8" fill="none" stroke="#222" stroke-width="1.600"/><path d="M9 16 1 27" stroke="#222" stroke-width="1.800"/></svg>
            <span>Type here to search</span>
        </div>
        <div class="taskcell taskcell-first d-flex align-items-center justify-content-center"><svg width="24" height="24"><circle cx="12" cy="12" r="10" fill="none" stroke="#fff" stroke-width="3"/></svg></div>
        <div class="taskcell d-flex align-items-center justify-content-center"><svg width="25" height="24"><path d="M1 1h17M1 23h17M3 7h13v10H3zM22 1v3M22 8v8M22 20v3" fill="none" stroke="#fff" stroke-width="1.300"/></svg></div>
        <div class="taskcell is-run d-flex align-items-center justify-content-center"><svg width="33" height="33"><use href="#t-chrome"/></svg></div>
        <div class="taskcell is-run d-flex align-items-center justify-content-center"><svg width="33" height="33"><use href="#t-r"/></svg></div>
        <div class="taskcell is-run d-flex align-items-center justify-content-center"><svg width="33" height="33"><use href="#t-folder"/></svg></div>
        <div class="taskcell is-run d-flex align-items-center justify-content-center"><svg width="33" height="33"><use href="#t-note"/></svg></div>
        <div class="taskcell is-run d-flex align-items-center justify-content-center"><svg width="33" height="33"><use href="#t-sublime"/></svg></div>
        <div class="taskcell is-run d-flex align-items-center justify-content-center"><svg width="33" height="33"><use href="#logo-q"/></svg></div>
        <div class="taskcell is-run is-cur d-flex align-items-center justify-content-center"><svg width="33" height="33"><use href="#logo-q"/></svg></div>

        <div class="traybox d-flex">
            <div class="traycell tw36 d-flex align-items-center justify-content-center"><svg width="20" height="12"><path d="M1 11l9-9 9 9" fill="none" stroke="#fff" stroke-width="1.300"/></svg></div>
            <div class="traycell tw36 d-flex align-items-center justify-content-center"><svg width="26" height="20"><path d="M2 1v5M6 1v5M1 6h6v4H5v5h3M9 7h15v10H9z" fill="none" stroke="#fff" stroke-width="1.200"/><rect x="10" y="8" width="13" height="8" fill="#fff"/></svg></div>
            <div class="traycell tw36 d-flex align-items-center justify-content-center"><svg width="22" height="22"><path d="M1 21C1 10 10 1 21 1M6 21c0-8 7-15 15-15M11 21c0-5 5-10 10-10" fill="none" stroke="#bbb" stroke-width="1.300"/><circle cx="18" cy="19" r="2" fill="#fff"/></svg></div>
            <div class="traycell tw34 d-flex align-items-center justify-content-center"><svg width="22" height="22"><path d="M1 7h4l6-5v18l-6-5H1z" fill="none" stroke="#fff" stroke-width="1.200"/><path d="M14 7c2 2 2 6 0 8M17 4c3 4 3 10 0 14" fill="none" stroke="#999" stroke-width="1.200"/></svg></div>
            <div class="traycell tw38 d-flex align-items-center justify-content-center"><svg width="24" height="23"><path d="M6 0l6 4-6 4-6-4zM18 0l6 4-6 4-6-4zM6 9l6 4-6 4-6-4zM18 9l6 4-6 4-6-4zM12 15l6 4-6 4-6-4z" fill="#fff"/></svg></div>
            <div class="traycell tw34 d-flex align-items-center justify-content-center"><svg width="24" height="18"><path d="M6 17a5.500 5.500 0 0 1-1-11 7.500 7.500 0 0 1 14 1 5 5 0 0 1-1 10z" fill="#fff"/><path d="M12 5l-4.500 5H10v4h4v-4h2.500z" fill="#302e22"/></svg></div>
            <div class="clockcell d-flex flex-column align-items-center justify-content-center"><span>3:10 PM</span><span>6/22/2020</span></div>
            <div class="notecell d-flex align-items-center justify-content-center"><svg width="24" height="25"><path d="M.7.7h22.600v19H16l-4 4-4-4H.7z" fill="none" stroke="#fff" stroke-width="1.300"/></svg></div>
        </div>
    </div>

    <!-- tooltip over the item toolbar button -->
    <div class="tipbox d-flex align-items-center">Set Map Extent to Match Main Canvas Extent</div>
</div>

<script src="https://cdn.jsdelivr.net/npm/bootstrap@5.3.0/dist/js/bootstrap.bundle.min.js"></script>
<script>
    const NS = "http://www.w3.org/2000/svg";
    const MM = 2.647;
    const ZERO_X = 403 - 44;
    const ZERO_Y = 303 - 178;

    function svgEl(parent, tag, attrs, text) {
        const el = document.createElementNS(NS, tag);
        for (const k in attrs) el.setAttribute(k, attrs[k]);
        if (text !== undefined) el.textContent = text;
        parent.appendChild(el);
        return el;
    }

    function drawRulers() {
        const h = document.getElementById("hRuler");
        for (let mm = -120; mm <= 420; mm += 5) {
            const x = Math.round(ZERO_X + mm * MM) + .5;
            const top = mm % 50 === 0 ? 1 : (mm % 25 === 0 ? 19 : 23);
            svgEl(h, "line", { x1: x, x2: x, y1: top, y2: 29, stroke: "#555" });
            if (mm % 50 === 0) svgEl(h, "text", { x: x + 2, y: 17, class: "ruler-txt" }, mm);
        }
        svgEl(h, "line", { x1: 1475.5, x2: 1475.5, y1: 1, y2: 29, stroke: "#e8322a" });

        const v = document.getElementById("vRuler");
        for (let mm = -45; mm <= 255; mm += 5) {
            const y = Math.round(ZERO_Y + mm * MM) + .5;
            const left = mm % 50 === 0 ? 0 : (mm % 25 === 0 ? 18 : 22);
            svgEl(v, "line", { x1: left, x2: 28, y1: y, y2: y, stroke: "#555" });
            if (mm % 50 === 0) {
                svgEl(v, "text", { class: "ruler-txt", "text-anchor": "end", transform: "translate(16 " + (y + 5) + ") rotate(-90)" }, mm);
            }
        }
        const ry = 551.5 - 178;
        svgEl(v, "line", { x1: 0, x2: 28, y1: ry, y2: ry, stroke: "#e8322a" });
    }

    // field raster: deterministic noise so every render is the same
    function rand2(x, y) {
        const s = Math.sin(x * 127.1 + y * 311.7) * 43758.5453;
        return s - Math.floor(s);
    }
    function smooth(x, y) {
        const xi = Math.floor(x), yi = Math.floor(y), fx = x - xi, fy = y - yi;
        const ux = fx * fx * (3 - 2 * fx), uy = fy * fy * (3 - 2 * fy);
        const a = rand2(xi, yi), b = rand2(xi + 1, yi), c = rand2(xi, yi + 1), d = rand2(xi + 1, yi + 1);
        return (a + (b - a) * ux) * (1 - uy) + (c + (d - c) * ux) * uy;
    }
    function ramp(t) {
        t = Math.max(0, Math.min(1, t));
        const pale = [250, 246, 180], mid = [206, 233, 148], deep = [130, 206, 104];
        const [a, b, k] = t < .5 ? [pale, mid, t * 2] : [mid, deep, (t - .5) * 2];
        return a.map((v, i) => Math.round(v + (b[i] - v) * k));
    }
    const REDS = [[226, 50, 34], [238, 90, 60], [250, 170, 110], [215, 40, 30]];

    function drawField() {
        const cv = document.getElementById("fieldMap");
        const ctx = cv.getContext("2d");
        const W = cv.width, H = cv.height;
        const img = ctx.createImageData(W, H);
        const ox = 1164 - W, oy = 835 - H;

        for (let py = 0; py < H; py++) {
            for (let px = 0; px < W; px++) {
                // coordinates taken off the 3x crop of the reference
                const zx = (px + ox - 840) * 3, zy = (py + oy - 580) * 3;
                const r = rand2(px + .3, py + .7), r2 = rand2(px * 1.7 + 4, py * 1.3 + 9);
                let col = null;

                const outer = 103 + (zy - 140) * .0671;
                const bandL = 108 + (zy - 140) * .115;
                const bandR = 138 + (zy - 150) * .11;
                const topY = 125 - (zx - 155) * .012;

                if (zy < 106) {
                    const hit = (zx > 135 && zx < 290 && zy > 95) || (zx > 470 && zx < 660 && zy > 93) || (zx > 690 && zx < 880 && zy > 86 && zy < 98);
                    if (hit && r < .3) col = r2 < .75 ? REDS[r2 < .4 ? 0 : 1] : [250, 225, 150];
                } else if (zy > 140 && zx >= outer && zx < bandL) {
                    if (r > .12) col = ramp(.55 + (r2 - .5) * .7);
                } else if (zy > 150 && zx >= bandL && zx < bandR) {
                    if (r < .12) col = REDS[r2 < .7 ? 0 : 3];
                } else if (zx >= bandR && zy >= topY && zx - 140 + zy - 125 > 16) {
                    const streak = smooth((px - py * .12) / 1.4, py / 9);
                    const broad = smooth(px / 26, py / 40);
                    let t = .5 + (streak - .5) * .5 + (broad - .5) * .2 + (r - .5) * .3;

                    // headland + edge
                    if (zy < topY + 9) {
                        if (r < .35) col = r2 < .5 ? REDS[2] : REDS[1];
                        t = .2 + r * .3;
                    } else if (zy < topY + 30) {
                        t = .5 + (r - .5) * .25;
                    }
                    if (zx < bandR + 26) t -= .06;

                    // pale cross band and the darker strip below it
                    if (zx > 205 && zy > 525 && zy < 550) t = .3 + (smooth(px / 7, 1.5) - .5) * .9 + (r - .5) * .3;
                    if (zx > 205 && zy >= 550 && zy < 572) t += .14;
                    if (zy > 552) t += .08;

                    // pale track beside the ditch
                    const track = 278 + (zy - 160) * .112;
                    if (zy < 530 && Math.abs(zx - track) < 9) t -= .2;
                    if (zy < 530 && Math.abs(zx - 800 - (zy - 160) * .05) < 9) t -= .1;

                    // greener patches
                    if (zx > 478 && zx < 565 && zy > 210 && zy < 355) t += .26;
                    if (zx > 288 && zx < 365 && zy > 688 && zy < 762) t += .36;

                    if (!col) col = ramp(t);

                    // red ditch
                    if (zy > 163) {
                        const cx = 228 + (zy - 165) * .0932;
                        const hw = zy < 235 ? 10 : (zy < 320 ? 6.5 : 4.8);
                        if (Math.abs(zx - cx) < hw) {
                            col = zy < 240 ? REDS[r < .75 ? 0 : 1] : (zy < 540 && r < .6 ? [240, 120, 72] : REDS[1]);
                        }
                    }
                    // blotch at the crossing
                    if (Math.hypot(zx - 198, zy - 535) < 12 && r < .6) col = REDS[2];
                }
                if (Math.hypot(zx - 178, zy - 556) < 15) col = null;

                const i = (py * W + px) * 4;
                if (col) {
                    img.data[i] = col[0]; img.data[i + 1] = col[1]; img.data[i + 2] = col[2]; img.data[i + 3] = 255;
                }
            }
        }
        ctx.putImageData(img, 0, 0);
    }

    drawRulers();
    drawField();
</script>
</body>
</html>
